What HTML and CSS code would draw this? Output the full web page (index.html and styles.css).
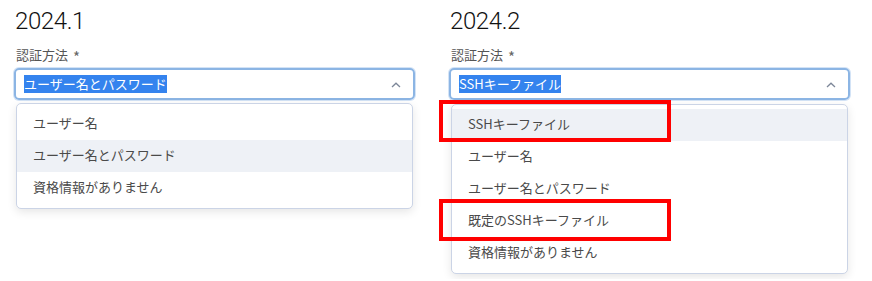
FILE: index.html
```html
<!DOCTYPE html>
<html lang="ja">
<head>
    <meta charset="UTF-8">
    <title>認証方法 2024.1 / 2024.2</title>
    <link rel="stylesheet" href="styles.css">
</head>
<body>
    <div class="compare">
        <!-- 2024.1 -->
        <section class="version">
            <h2>2024.1</h2>
            <label class="field-label">認証方法 <span class="req">*</span></label>
            <div class="select-wrap">
                <div class="select">
                    <span class="selected">ユーザー名とパスワード</span>
                    <svg class="caret" width="10" height="6" viewBox="0 0 10 6"><path d="M1 5 L5 1.2 L9 5" fill="none" stroke="#7d8799" stroke-width="1.3"/></svg>
                </div>
                <ul class="menu">
                    <li>ユーザー名</li>
                    <li class="hover">ユーザー名とパスワード</li>
                    <li>資格情報がありません</li>
                </ul>
            </div>
        </section>

        <!-- 2024.2 -->
        <section class="version">
            <h2>2024.2</h2>
            <label class="field-label">認証方法 <span class="req">*</span></label>
            <div class="select-wrap">
                <div class="select">
                    <span class="selected">SSHキーファイル</span>
                    <svg class="caret" width="10" height="6" viewBox="0 0 10 6"><path d="M1 5 L5 1.2 L9 5" fill="none" stroke="#7d8799" stroke-width="1.3"/></svg>
                </div>
                <ul class="menu menu-wide">
                    <li class="hover">SSHキーファイル</li>
                    <li>ユーザー名</li>
                    <li>ユーザー名とパスワード</li>
                    <li>既定のSSHキーファイル</li>
                    <li>資格情報がありません</li>
                </ul>
                <div class="mark mark-1"></div>
                <div class="mark mark-2"></div>
            </div>
        </section>
    </div>
</body>
</html>
```

FILE: styles.css
```css
/* Page */
html, body {
    min-height: 100%;
}

body {
    margin: 0;
    padding: 5px 14px;
    background: #fff;
    font-family: "Noto Sans CJK JP", "Noto Sans", sans-serif;
    color: #333;
}

.compare {
    display: grid;
    grid-template-columns: 401px 401px;
    column-gap: 34px;
    align-items: start;
}

/* Heading */
h2 {
    margin: 0 0 9px 1px;
    font-family: Roboto, "Noto Sans", sans-serif;
    font-weight: 300;
    font-size: 24px;
    letter-spacing: -0.4px;
    line-height: 32px;
    color: #111;
}

.field-label {
    display: block;
    margin: 0 0 3px 2px;
    font-size: 13px;
    line-height: 17px;
    color: #555;
}

.req {
    margin-left: 2px;
    font-size: 15px;
    vertical-align: -3px;
    color: #666;
}

/* Select */
.select-wrap {
    position: relative;
}

.select {
    display: flex;
    align-items: center;
    justify-content: space-between;
    height: 32px;
    box-sizing: border-box;
    padding: 0 12px 0 8px;
    border: 2px solid #8cb5e4;
    border-radius: 5px;
    box-shadow: 0 0 0 1px #d3e3f6;
}

.selected {
    background: #3483ee;
    color: #fff;
    font-size: 13px;
    line-height: 18px;
}

.caret {
    margin-top: 2px;
}

/* Dropdown menu (open) */
.menu {
    margin: 3px 2px 0;
    padding: 4px 0;
    list-style: none;
    background: #fff;
    border: 1px solid #cbd4e6;
    border-radius: 5px;
    box-shadow: 0 3px 10px rgba(0, 0, 0, 0.10);
}

.menu-wide {
    margin-top: 4px;
}

.menu li {
    height: 32px;
    line-height: 30px;
    padding-left: 16px;
    font-size: 13px;
    color: #4a4a4a;
}

.menu li.hover {
    background: #eef1f6;
}

/* Red highlight boxes */
.mark {
    position: absolute;
    left: -10px;
    width: 232px;
    height: 42px;
    box-sizing: border-box;
    border: 4px solid #f00;
}

.mark-1 {
    top: 32px;
}

.mark-2 {
    top: 131px;
}
```
